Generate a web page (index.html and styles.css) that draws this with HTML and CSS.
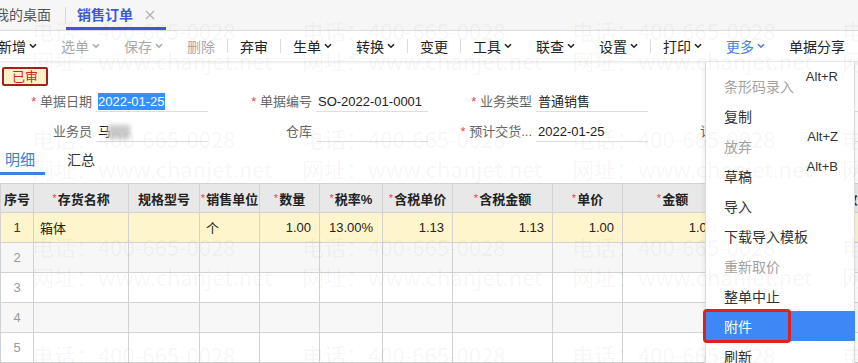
FILE: index.html
```html
<!DOCTYPE html>
<html>
<head>
  <meta charset="utf-8">
  <title>销售订单</title>
  <link rel="stylesheet" href="styles.css">
</head>
<body>
<div class="page">

  <!-- open tabs -->
  <div class="tabbar">
    <span class="tab first">我的桌面</span>
    <span class="tab-sep"></span>
    <span class="tab active">销售订单
      <svg class="close" width="10" height="10" viewBox="0 0 10 10"><path d="M1 1L9 9M9 1L1 9" stroke="currentColor" stroke-width="1.2" fill="none"/></svg>
    </span>
  </div>

  <!-- toolbar -->
  <div class="toolbar">
    <span class="tool">新增<svg class="chev" width="8" height="6" viewBox="0 0 8 6"><path d="M1 1.2L4 4.2L7 1.2" stroke="currentColor" stroke-width="1.6" fill="none"/></svg></span>
    <span class="tool off">选单<svg class="chev" width="8" height="6" viewBox="0 0 8 6"><path d="M1 1.2L4 4.2L7 1.2" stroke="currentColor" stroke-width="1.6" fill="none"/></svg></span>
    <span class="tool off">保存<svg class="chev" width="8" height="6" viewBox="0 0 8 6"><path d="M1 1.2L4 4.2L7 1.2" stroke="currentColor" stroke-width="1.6" fill="none"/></svg></span>
    <span class="tool off">删除</span>
    <span class="sep"></span>
    <span class="tool">弃审</span>
    <span class="sep"></span>
    <span class="tool">生单<svg class="chev" width="8" height="6" viewBox="0 0 8 6"><path d="M1 1.2L4 4.2L7 1.2" stroke="currentColor" stroke-width="1.6" fill="none"/></svg></span>
    <span class="tool">转换<svg class="chev" width="8" height="6" viewBox="0 0 8 6"><path d="M1 1.2L4 4.2L7 1.2" stroke="currentColor" stroke-width="1.6" fill="none"/></svg></span>
    <span class="sep"></span>
    <span class="tool">变更</span>
    <span class="sep"></span>
    <span class="tool">工具<svg class="chev" width="8" height="6" viewBox="0 0 8 6"><path d="M1 1.2L4 4.2L7 1.2" stroke="currentColor" stroke-width="1.6" fill="none"/></svg></span>
    <span class="tool">联查<svg class="chev" width="8" height="6" viewBox="0 0 8 6"><path d="M1 1.2L4 4.2L7 1.2" stroke="currentColor" stroke-width="1.6" fill="none"/></svg></span>
    <span class="tool">设置<svg class="chev" width="8" height="6" viewBox="0 0 8 6"><path d="M1 1.2L4 4.2L7 1.2" stroke="currentColor" stroke-width="1.6" fill="none"/></svg></span>
    <span class="sep"></span>
    <span class="tool">打印<svg class="chev" width="8" height="6" viewBox="0 0 8 6"><path d="M1 1.2L4 4.2L7 1.2" stroke="currentColor" stroke-width="1.6" fill="none"/></svg></span>
    <span class="tool on">更多<svg class="chev" width="8" height="6" viewBox="0 0 8 6"><path d="M1 1.2L4 4.2L7 1.2" stroke="currentColor" stroke-width="1.6" fill="none"/></svg></span>
    <span class="tool">单据分享</span>
  </div>

  <div class="content">
    <div class="status"><span class="badge">已审</span></div>

    <!-- header fields -->
    <div class="form">
      <div class="form-row">
        <div class="field"><label class="req">单据日期</label><div class="value"><span class="selected">2022-01-25</span></div></div>
        <div class="field"><label class="req">单据编号</label><div class="value">SO-2022-01-0001</div></div>
        <div class="field"><label class="req">业务类型</label><div class="value">普通销售</div></div>
        <div class="field"><label>备注</label><div class="value"></div></div>
      </div>
      <div class="form-row">
        <div class="field"><label>业务员</label><div class="value">马<span class="blur"></span></div></div>
        <div class="field"><label>仓库</label><div class="value"></div></div>
        <div class="field"><label class="req">预计交货...</label><div class="value">2022-01-25</div></div>
        <div class="field"><label>订单说明</label><div class="value"></div></div>
      </div>
    </div>

    <div class="subtabs">
      <span class="subtab active">明细</span>
      <span class="subtab">汇总</span>
    </div>

    <!-- detail grid -->
    <table class="grid">
      <colgroup>
        <col style="width:33px"><col style="width:95px"><col style="width:71px"><col style="width:60px">
        <col style="width:60px"><col style="width:63px"><col style="width:70px"><col style="width:100px">
        <col style="width:70px"><col style="width:100px"><col style="width:90px"><col style="width:90px">
      </colgroup>
      <thead>
        <tr>
          <th>序号</th>
          <th><i>*</i>存货名称</th>
          <th>规格型号</th>
          <th><i>*</i>销售单位</th>
          <th><i>*</i>数量</th>
          <th><i>*</i>税率%</th>
          <th><i>*</i>含税单价</th>
          <th><i>*</i>含税金额</th>
          <th><i>*</i>单价</th>
          <th><i>*</i>金额</th>
          <th>税额</th>
          <th>数量</th>
        </tr>
      </thead>
      <tbody>
        <tr class="current">
          <td class="idx">1</td><td>箱体</td><td></td><td>个</td>
          <td class="num">1.00</td><td class="mid">13.00%</td><td class="num">1.13</td><td class="num">1.13</td>
          <td class="num">1.00</td><td class="num">1.00</td><td class="num">0.13</td><td></td>
        </tr>
        <tr><td class="idx">2</td><td></td><td></td><td></td><td></td><td></td><td></td><td></td><td></td><td></td><td></td><td></td></tr>
        <tr><td class="idx">3</td><td></td><td></td><td></td><td></td><td></td><td></td><td></td><td></td><td></td><td></td><td></td></tr>
        <tr><td class="idx">4</td><td></td><td></td><td></td><td></td><td></td><td></td><td></td><td></td><td></td><td></td><td></td></tr>
        <tr><td class="idx">5</td><td></td><td></td><td></td><td></td><td></td><td></td><td></td><td></td><td></td><td></td><td></td></tr>
      </tbody>
    </table>
  </div>

  <!-- "更多" dropdown -->
  <div class="menu">
    <div class="item off"><span>条形码录入</span><span class="key">Alt+R</span></div>
    <div class="item"><span>复制</span></div>
    <div class="item off"><span>放弃</span><span class="key">Alt+Z</span></div>
    <div class="item"><span>草稿</span><span class="key">Alt+B</span></div>
    <div class="item"><span>导入</span></div>
    <div class="item"><span>下载导入模板</span></div>
    <div class="item off"><span>重新取价</span></div>
    <div class="item"><span>整单中止</span></div>
    <div class="item hover"><span>附件</span><span class="mark"></span></div>
    <div class="item"><span>刷新</span></div>
  </div>

  <!-- watermark -->
  <div class="watermark">
    <div class="wm"><span>电话：400-665-0028</span><span>网址：www.chanjet.net</span></div>
    <div class="wm"><span>电话：400-665-0028</span><span>网址：www.chanjet.net</span></div>
    <div class="wm"><span>电话：400-665-0028</span><span>网址：www.chanjet.net</span></div>
    <div class="wm"><span>电话：400-665-0028</span><span>网址：www.chanjet.net</span></div>
    <div class="wm"><span>电话：400-665-0028</span><span>网址：www.chanjet.net</span></div>
    <div class="wm"><span>电话：400-665-0028</span><span>网址：www.chanjet.net</span></div>
    <div class="wm"><span>电话：400-665-0028</span><span>网址：www.chanjet.net</span></div>
    <div class="wm"><span>电话：400-665-0028</span><span>网址：www.chanjet.net</span></div>
    <div class="wm"><span>电话：400-665-0028</span><span>网址：www.chanjet.net</span></div>
    <div class="wm"><span>电话：400-665-0028</span><span>网址：www.chanjet.net</span></div>
    <div class="wm"><span>电话：400-665-0028</span><span>网址：www.chanjet.net</span></div>
    <div class="wm"><span>电话：400-665-0028</span><span>网址：www.chanjet.net</span></div>
    <div class="wm"><span>电话：400-665-0028</span><span>网址：www.chanjet.net</span></div>
    <div class="wm"><span>电话：400-665-0028</span><span>网址：www.chanjet.net</span></div>
    <div class="wm"><span>电话：400-665-0028</span><span>网址：www.chanjet.net</span></div>
    <div class="wm"><span>电话：400-665-0028</span><span>网址：www.chanjet.net</span></div>
  </div>

</div>
</body>
</html>
```

FILE: styles.css
```css
* {
  box-sizing: border-box;
}

body {
  margin: 0;
  font-family: "Liberation Sans", "Noto Sans CJK SC", sans-serif;
  color: #222;
  background: #fff;
}

.page {
  position: relative;
  width: 858px;
  height: 363px;
  overflow: hidden;
}

/* Tab bar */
.tabbar {
  height: 31px;
  display: flex;
  align-items: center;
  background: #f6f6f6;
  border-bottom: 1px solid #e4e4e4;
  font-size: 14px;
}

.tab {
  height: 30px;
  line-height: 30px;
  color: #555;
  display: flex;
  align-items: center;
}

.tab.first {
  margin-left: -5px;
  padding-right: 14px;
}

.tab-sep {
  width: 1px;
  height: 16px;
  background: #d8d8d8;
}

.tab.active {
  padding: 0 11px 0 11px;
  color: #3a5bd6;
  font-weight: bold;
  border-bottom: 3px solid #3a59d6;
  line-height: 27px;
  height: 30px;
  padding-top: 3px;
}

.tab .close {
  margin-left: 12px;
  color: #b0b0b0;
}

/* Toolbar */
.toolbar {
  height: 30px;
  display: flex;
  align-items: center;
  margin-left: -14px;
  background: #fff;
  font-size: 14px;
  box-shadow: 0 1px 3px rgba(0, 0, 0, 0.12);
  position: relative;
}

.tool {
  padding: 0 12px;
  display: flex;
  align-items: center;
  white-space: nowrap;
  color: #222;
}

.tool .chev {
  margin-left: 3px;
}

.tool.off {
  color: #a8a8a8;
}

.tool.on {
  color: #4a7de6;
}

.sep {
  width: 1px;
  height: 14px;
  background: #dcdcdc;
}

/* Form header */
.content {
  padding-top: 6px;
}

.status {
  padding-left: 2px;
  height: 19px;
}

.badge {
  display: inline-block;
  width: 46px;
  height: 19px;
  line-height: 15px;
  text-align: center;
  font-size: 13px;
  color: #c4262a;
  background: #fff2c4;
  border: 2px solid #a51f1f;
  border-radius: 2px;
}

.form {
  margin-top: 6px;
}

.form-row {
  display: flex;
  margin-bottom: 10px;
  font-size: 13px;
}

.field {
  width: 220px;
  flex: none;
  display: flex;
  align-items: flex-end;
}

.field label {
  width: 92px;
  text-align: right;
  color: #666;
  line-height: 20px;
  white-space: nowrap;
}

.field label.req::before {
  content: "* ";
  color: #e5465a;
}

.value {
  width: 112px;
  height: 20px;
  line-height: 20px;
  margin-left: 4px;
  padding-left: 2px;
  border-bottom: 1px solid #dedede;
  white-space: nowrap;
  display: flex;
  align-items: center;
}

.selected {
  background: #3390ff;
  color: #fff;
  line-height: 17px;
}

.blur {
  display: inline-block;
  width: 22px;
  height: 14px;
  margin-left: -3px;
  background: #c9c9c9;
  filter: blur(2px);
}

/* Detail / summary tabs */
.subtabs {
  margin-top: -4px;
  display: flex;
  height: 27px;
}

.subtab {
  width: 45px;
  padding-left: 5px;
  line-height: 24px;
  font-size: 14px;
  color: #333;
}

.subtab.active {
  color: #3b7ce0;
  font-size: 15px;
  border-bottom: 3px solid #3b82e6;
}

.subtab + .subtab {
  padding-left: 22px;
  width: 80px;
}

/* Grid */
.grid {
  margin-top: 8px;
  border-collapse: collapse;
  table-layout: fixed;
  width: 852px;
  font-size: 13px;
}

.grid th {
  height: 29px;
  background: #e8e8e8;
  border: 1px solid #d2d2d2;
  font-weight: bold;
  color: #222;
  white-space: nowrap;
  overflow: hidden;
  padding: 0;
}

.grid th i {
  font-style: normal;
  color: #e5465a;
  font-weight: normal;
  font-size: 11px;
  vertical-align: 2px;
  margin-right: 1px;
}

.grid td {
  height: 30px;
  border: 1px solid #d2d2d2;
  padding: 0 6px;
  white-space: nowrap;
}

.grid tbody tr:nth-child(even) {
  background: #f7f7f7;
}

.grid tr.current {
  background: #fff5cc;
}

.grid td.idx {
  text-align: center;
  color: #9a9a9a;
  padding: 0;
}

.grid tr.current td.idx {
  color: #333;
}

.grid td.num {
  text-align: right;
  padding-right: 8px;
}

.grid td.mid {
  text-align: center;
}

/* Dropdown menu */
.menu {
  position: absolute;
  left: 705px;
  top: 62px;
  width: 150px;
  height: 310px;
  padding-top: 9px;
  background: #fff;
  border-left: 1px solid #dcdcdc;
  border-right: 1px solid #dcdcdc;
  box-shadow: 0 2px 6px rgba(0, 0, 0, 0.1);
  font-size: 14px;
}

.menu .item {
  position: relative;
  height: 30px;
  padding: 0 16px 0 18px;
  display: flex;
  justify-content: space-between;
  align-items: center;
  color: #333;
}

.menu .item.off {
  color: #a3a3a3;
}

.menu .key {
  align-self: flex-start;
  margin-top: -2px;
  line-height: 16px;
  font-size: 13px;
  color: #333;
}

.menu .item.hover {
  background: #3d88f6;
  color: #fff;
  margin-right: -1px;
}

.menu .mark {
  position: absolute;
  left: -3px;
  top: -2px;
  width: 88px;
  height: 34px;
  border: 3px solid #e0201f;
  border-radius: 4px;
}

/* Watermark */
.watermark {
  position: absolute;
  left: 0;
  top: 0;
  padding: 15px 0 0 32px;
  display: grid;
  grid-template-columns: repeat(4, 270px);
  grid-auto-rows: 108px;
  pointer-events: none;
  font-family: "Noto Sans CJK SC", sans-serif;
  font-size: 22px;
  color: rgba(0, 0, 0, 0.05);
}

.wm span {
  display: block;
  line-height: 30px;
  white-space: nowrap;
}
```
